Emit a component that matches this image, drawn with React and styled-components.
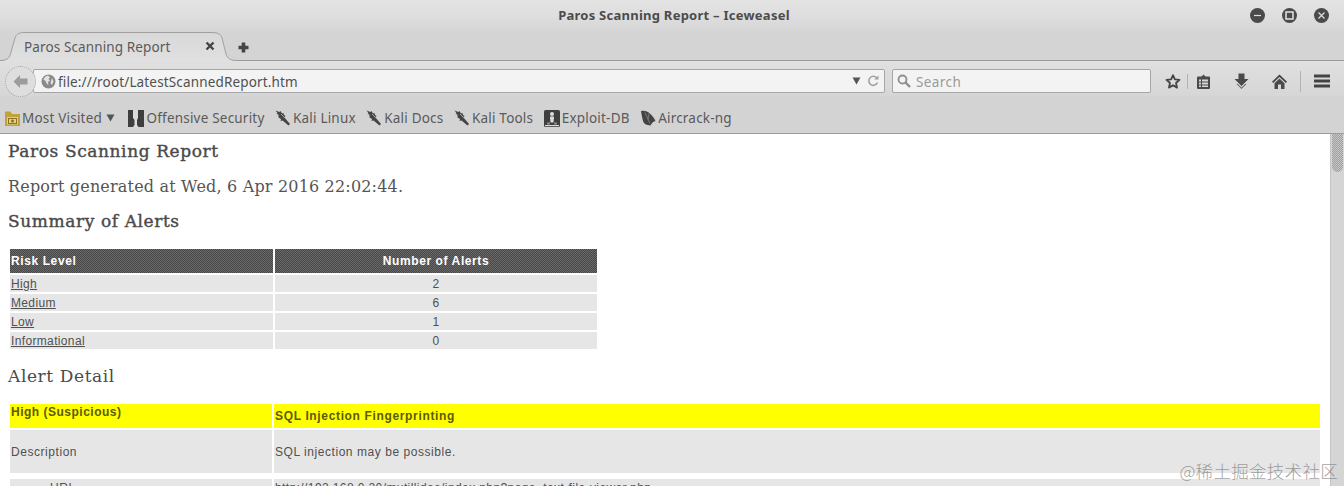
import React from 'react';
import styled, { createGlobalStyle } from 'styled-components';

const Global = createGlobalStyle`
  html, body { margin: 0; padding: 0; height: 486px; overflow: hidden; background: #fff; }
`;

const uiFont = `"Noto Sans", "Open Sans", sans-serif`;

const Window = styled.div`
  position: relative;
  width: 1344px;
  height: 486px;
  overflow: hidden;
  display: flex;
  flex-direction: column;
  font-family: ${uiFont};
  color: #4a4a4a;
`;

const Chrome = styled.header`
  height: 134px;
  flex: none;
  box-sizing: border-box;
  border-bottom: 1px solid #9c9c9c;
  background: linear-gradient(#e4e4e4 0, #dcdcdc 20px, #d4d4d4 34px, #d3d3d3 100%);
  display: flex;
  flex-direction: column;
`;

const TitleBar = styled.div`
  height: 32px;
  flex: none;
  display: grid;
  grid-template-columns: 1fr auto 1fr;
  align-items: center;
`;

const Title = styled.div`
  grid-column: 2;
  font-size: 13px;
  font-weight: 700;
  color: #4c4c4c;
  letter-spacing: 0.25px;
  padding: 0 0 3px 0;
  margin-left: 4px;
`;

const WindowButtons = styled.div`
  grid-column: 3;
  justify-self: end;
  display: flex;
  gap: 17px;
  padding: 0 15px 2px 0;
`;

const WindowButton = styled.div`
  width: 15px;
  height: 15px;
  border-radius: 50%;
  background: #4a4a4a;
  display: flex;
  align-items: center;
  justify-content: center;
`;

const TabStrip = styled.div`
  height: 29px;
  flex: none;
  box-sizing: border-box;
  border-bottom: 1px solid #9a9a9a;
  display: flex;
  align-items: flex-end;
`;

const Tab = styled.div`
  position: relative;
  width: 237px;
  height: 29px;
  box-sizing: border-box;
  margin-bottom: -1px;
  display: flex;
  align-items: center;
  justify-content: space-between;
  padding: 1px 21px 0 24px;
  font-size: 13.5px;
  color: #5a5a5a;
  letter-spacing: 0.12px;
`;

const TabShape = styled.svg`
  position: absolute;
  left: 0;
  top: 0;
`;

const TabLabel = styled.span`
  position: relative;
`;

const TabClose = styled.span`
  position: relative;
  display: flex;
  margin-top: -3px;
`;

const NewTab = styled.div`
  margin: 0 0 7px 1px;
  display: flex;
`;

const NavBar = styled.div`
  height: 35px;
  flex: none;
  display: flex;
  align-items: center;
  background: linear-gradient(#e0e0e0, #d6d6d6);
  padding: 5px 0 0 5px;
  box-sizing: border-box;
`;

const BackButton = styled.div`
  width: 31px;
  height: 31px;
  box-sizing: border-box;
  border-radius: 50%;
  border: 1px dotted #a8a8a8;
  background: #dedede;
  display: flex;
  align-items: center;
  justify-content: center;
  flex: none;
  position: relative;
  z-index: 1;
  margin-right: -3px;
`;

const Field = styled.div`
  height: 24px;
  box-sizing: border-box;
  border: 1px solid #a6a6a6;
  border-radius: 2px;
  background: #f3f3f3;
  display: flex;
  align-items: center;
  flex: none;
  width: ${p => p.$width}px;
  margin-left: ${p => p.$gap}px;
  padding: 0 5px 0 ${p => p.$left}px;
`;

const UrlText = styled.span`
  margin-left: 2px;
  padding-top: 1px;
  font-size: 13.5px;
  color: #505050;
  letter-spacing: 0.15px;
  flex: 1;
  white-space: nowrap;
`;

const ReloadSlot = styled.span`
  display: flex;
  margin-left: 6px;
`;

const SearchText = styled.span`
  margin-left: 5px;
  padding-top: 1px;
  font-size: 13.5px;
  color: #9a9a9a;
  letter-spacing: 0.4px;
`;

const ToolIcons = styled.div`
  display: flex;
  align-items: center;
  flex: none;
  margin-left: 14px;
`;

const ToolSlot = styled.div`
  width: ${p => p.$width}px;
  display: flex;
  justify-content: center;
`;

const Divider = styled.div`
  width: 1px;
  height: ${p => p.$height}px;
  background: #b2b2b2;
  flex: none;
  margin-left: ${p => p.$left}px;
`;

const BookmarkBar = styled.nav`
  flex: 1;
  display: flex;
  align-items: center;
  gap: 10.5px;
  padding: 7px 0 0 5px;
`;

const Bookmark = styled.div`
  display: flex;
  align-items: center;
  gap: 2px;
  font-size: 13.5px;
  color: #5a5a5a;
  letter-spacing: 0.2px;
  white-space: nowrap;
`;

const BookmarkCaret = styled.span`
  display: flex;
  margin: 0 3px 0 2px;
`;

const Body = styled.div`
  flex: 1;
  min-height: 0;
  display: flex;
`;

const Page = styled.main`
  flex: 1;
  min-width: 0;
  overflow: hidden;
  padding: 8px 10px 0 8px;
  box-sizing: border-box;
  background: #fff;
`;

const Heading = styled.h3`
  margin: ${p => p.$margin || 0};
  font-family: "DejaVu Serif", serif;
  font-size: 17px;
  font-weight: 400;
  color: #4a4a4a;
  line-height: 18px;
  letter-spacing: ${p => p.$spacing}px;
  -webkit-text-stroke: ${p => p.$stroke || 0}px #4a4a4a;
`;

const Generated = styled.p`
  margin: 17px 0 15px;
  font-family: "DejaVu Serif", serif;
  font-size: 16px;
  line-height: 20px;
  font-weight: 400;
  color: #555;
  letter-spacing: 0.18px;
`;

const Table = styled.table`
  border-collapse: separate;
  border-spacing: 2px;
  table-layout: fixed;
  width: ${p => p.$width}px;
  font-family: "Liberation Sans", Arial, sans-serif;
  font-size: 12px;
  letter-spacing: ${p => p.$spacing}px;
  color: #505050;
  margin: 17px 0 0;
`;

const FirstCol = styled.col`
  width: ${p => p.$width}px;
`;

const HeadCell = styled.th`
  height: 24px;
  padding: 0 1px;
  box-sizing: border-box;
  color: #fff;
  font-size: 12px;
  font-weight: 700;
  letter-spacing: 0.6px;
  text-align: ${p => p.$align || 'left'};
  background: repeating-conic-gradient(#474747 0 25%, #6a6a6a 0 50%) 0 0 / 2px 2px;
  vertical-align: middle;
`;

const Cell = styled.td`
  height: ${p => p.$height}px;
  padding: 0 1px;
  padding-left: ${p => p.$indent || 1}px;
  box-sizing: border-box;
  background: #e6e6e6;
  text-align: ${p => p.$align || 'left'};
  vertical-align: middle;
  line-height: 14px;
  overflow: hidden;
  white-space: nowrap;
  ${p => p.$spacing ? `letter-spacing: ${p.$spacing}px;` : ''}
`;

const SpacerCell = styled.td`
  height: 2px;
  padding: 0;
`;

const AlertCell = styled.td`
  height: 24px;
  padding: 0 1px;
  box-sizing: border-box;
  background: #ffff00;
  color: #5b5b00;
  font-weight: 700;
  letter-spacing: ${p => p.$spacing}px;
  vertical-align: ${p => p.$top ? 'top' : 'middle'};
  line-height: 16px;
`;

const RiskLink = styled.a`
  color: #505050;
  text-decoration: underline;
`;

const ScrollTrack = styled.aside`
  width: 14px;
  flex: none;
  box-sizing: border-box;
  background: #d5d5d5;
  border-left: 1px solid #c4c4c4;
  padding: 0 1px;
`;

const ScrollThumb = styled.div`
  height: 38px;
  border-radius: 0 0 6px 6px;
  background: repeating-conic-gradient(#9f9f9f 0 25%, #c6c6c6 0 50%) 0 0 / 2px 2px;
`;

const Watermark = styled.div`
  position: absolute;
  right: 6px;
  bottom: 5px;
  font-family: "Noto Sans CJK SC", sans-serif;
  font-size: 17.5px;
  font-weight: 300;
  line-height: 20px;
  color: rgba(120, 120, 120, 0.7);
  letter-spacing: 0.3px;
`;

const TabOutline = () => (
  <TabShape width="237" height="29" viewBox="0 0 237 29">
    <defs>
      <linearGradient id="tabFill" x1="0" y1="0" x2="0" y2="1">
        <stop offset="0" stopColor="#d8d8d8" />
        <stop offset="1" stopColor="#e0e0e0" />
      </linearGradient>
    </defs>
    <path d="M0 28.500C6 28.500 9 27 10.500 22L15 6C16 2.500 19 0.500 24 0.500H212C218 0.500 221 2.500 222 6L226 22C227.500 27 231 28.500 237 28.500V29H0z" fill="url(#tabFill)" />
    <path d="M0 28.500C6 28.500 9 27 10.500 22L15 6C16 2.500 19 0.500 24 0.500H212C218 0.500 221 2.500 222 6L226 22C227.500 27 231 28.500 237 28.500" fill="none" stroke="#a0a0a0" />
  </TabShape>
);
const Close = () => (
  <svg width="12" height="12" viewBox="0 0 12 12"><path d="M2.500 2.500l7 7M9.500 2.500l-7 7" stroke="#444" strokeWidth="2.400" /></svg>
);
const Plus = () => (
  <svg width="11" height="11" viewBox="0 0 11 11"><path d="M5.500 0.500v10M0.500 5.500h10" stroke="#444" strokeWidth="3.600" /></svg>
);
const Minimize = () => (
  <svg width="9" height="9" viewBox="0 0 9 9"><path d="M1 4.500h7" stroke="#ddd" strokeWidth="1.200" /></svg>
);
const Maximize = () => (
  <svg width="9" height="9" viewBox="0 0 9 9"><rect x="1" y="1" width="7" height="7" fill="none" stroke="#e4e4e4" strokeWidth="1.500" /></svg>
);
const CloseSmall = () => (
  <svg width="9" height="9" viewBox="0 0 9 9"><path d="M1.500 1.500l6 6M7.500 1.500l-6 6" stroke="#ddd" strokeWidth="1.200" /></svg>
);
const BackArrow = () => (
  <svg width="15" height="13" viewBox="0 0 15 13"><path d="M7 0L0.500 6.500 7 13V9.500h7.500v-6H7z" fill="#9c9c9c" /></svg>
);
const Globe = () => (
  <svg width="15" height="15" viewBox="0 0 15 15">
    <circle cx="7.500" cy="7.500" r="7" fill="#8a8a8a" />
    <path d="M7 1.500C5 2 3 3.500 2.500 5.500l2 1.500 1.500 3 1.500 1-.5-3L9 6.500 7.500 5 9 3.500zM11 4l1.500 3.500L11 11 9.500 9z" fill="#e2e2e2" />
  </svg>
);
const Caret = () => (
  <svg width="9" height="8" viewBox="0 0 9 8"><path d="M0.500 0.500h8L4.500 7.500z" fill="#555" /></svg>
);
const Reload = () => (
  <svg width="12" height="12" viewBox="0 0 12 12">
    <path d="M10 3.200A4.500 4.500 0 1 0 10.500 7.500" fill="none" stroke="#a2a2a2" strokeWidth="1.600" />
    <path d="M7.200 4.500H11.500V0.500z" fill="#a2a2a2" />
  </svg>
);
const Magnifier = () => (
  <svg width="14" height="14" viewBox="0 0 14 14">
    <circle cx="5.500" cy="5.500" r="4" fill="none" stroke="#8e8e8e" strokeWidth="1.800" />
    <path d="M8.500 8.500l4.500 4.500" stroke="#8e8e8e" strokeWidth="2.400" />
  </svg>
);
const Star = () => (
  <svg width="17" height="17" viewBox="0 0 17 17">
    <path d="M8.500 1.800l2 4.500 4.900.5-3.700 3.300 1.100 4.900-4.300-2.500-4.300 2.500 1.100-4.900L1.600 6.800l4.900-.5z" fill="none" stroke="#444" strokeWidth="1.900" strokeLinejoin="round" />
  </svg>
);
const Clipboard = () => (
  <svg width="15" height="15" viewBox="0 0 15 15">
    <path d="M5.500 2.500L7.500 0.500 9.500 2.500H13a1 1 0 0 1 1 1V14a1 1 0 0 1-1 1H2a1 1 0 0 1-1-1V3.500a1 1 0 0 1 1-1z" fill="#4a4a4a" />
    <path d="M3 5.500h2v2H3zM6 5.500h6v2H6zM3 8.500h2v2H3zM6 8.500h6v2H6zM3 11.500h2v1.500H3zM6 11.500h6v1.500H6z" fill="#d8d8d8" />
  </svg>
);
const Download = () => (
  <svg width="15" height="16" viewBox="0 0 15 16">
    <path d="M4.500 0.500h6V6H14.500L7.500 13 0.500 6H4.500z" fill="#4a4a4a" />
    <path d="M2.500 11l5 5 5-5-1.200-.2-3.800 3.700-3.800-3.700z" fill="#6d6d6d" />
  </svg>
);
const Home = () => (
  <svg width="15" height="15" viewBox="0 0 15 15">
    <path d="M7.500 0.500L0 7.700 1.200 9 7.500 3 13.800 9 15 7.700z" fill="#444" />
    <path d="M2.500 9.200L7.500 4.500l5 4.700V15H9V10.500H6V15H2.500z" fill="#4a4a4a" />
  </svg>
);
const Menu = () => (
  <svg width="16" height="14" viewBox="0 0 16 14">
    <path d="M0 2h16M0 7h16M0 12h16" stroke="#444" strokeWidth="2.800" />
  </svg>
);
const FolderCamera = () => (
  <svg width="15" height="15" viewBox="0 0 15 15">
    <path d="M0 0.500h5.500L7 3h8v12H0z" fill="#bfa33a" />
    <rect x="2" y="6" width="11" height="7.500" fill="#e2cf85" />
    <rect x="3.500" y="7.500" width="8" height="5" fill="none" stroke="#8c7420" strokeWidth="1" />
    <circle cx="7.500" cy="10" r="1.500" fill="#8c7420" />
  </svg>
);
const OffSecIcon = () => (
  <svg width="16" height="17" viewBox="0 0 16 17">
    <rect width="16" height="17" fill="#3e3e3e" />
    <path d="M5 0h5v8l-1 2v5l1.500 2H5l1.500-2v-5L5 8z" fill="#dcdcdc" />
  </svg>
);
const DragonIcon = () => (
  <svg width="16" height="16" viewBox="0 0 16 16">
    <path d="M0.500 0.500l4 1.500 1-1 1.500 2.500 1.500-.5.500 2 1.500 1-1 1.500 5.500 6.500-1.500 1.500-6-5-2 .5.500-2-2.500-1.500L3.500 4.500l-2-.5 1-1z" fill="#454545" />
    <path d="M6 4l4 4" stroke="#bdbdbd" strokeWidth="0.800" />
  </svg>
);
const ExploitIcon = () => (
  <svg width="16" height="17" viewBox="0 0 16 17">
    <rect width="16" height="17" rx="1.500" fill="#3f3f3f" />
    <circle cx="8" cy="4" r="2" fill="#dedede" />
    <path d="M6 6.500h4l-.5 6h-3z" fill="#dedede" />
    <path d="M1 15h14v1.200H1z" fill="#dedede" />
    <path d="M3 12.500h3v2H3zM10 12.500h3v2h-3z" fill="#8a8a8a" />
  </svg>
);
const AircrackIcon = () => (
  <svg width="16" height="16" viewBox="0 0 16 16">
    <path d="M1 1c6-1.500 12 4 14.500 10-2 .3-3.500 1.700-5 4.500C7 15 4 14.500 3 11 2.200 8 1.500 4.500 1 1z" fill="#444" />
    <path d="M5 2.500l5 11M9 3.500l-1 6" stroke="#8a8a8a" strokeWidth="0.800" fill="none" />
  </svg>
);

const bookmarks = [
  { icon: <FolderCamera />, label: 'Most Visited', caret: true },
  { icon: <OffSecIcon />, label: 'Offensive Security' },
  { icon: <DragonIcon />, label: 'Kali Linux' },
  { icon: <DragonIcon />, label: 'Kali Docs' },
  { icon: <DragonIcon />, label: 'Kali Tools' },
  { icon: <ExploitIcon />, label: 'Exploit-DB' },
  { icon: <AircrackIcon />, label: 'Aircrack-ng' },
];

const risks = [
  ['High', 2],
  ['Medium', 6],
  ['Low', 1],
  ['Informational', 0],
];

export default function App() {
  return (
    <Window>
      <Global />
      <Chrome>
        <TitleBar>
          <Title>Paros Scanning Report – Iceweasel</Title>
          <WindowButtons>
            <WindowButton><Minimize /></WindowButton>
            <WindowButton><Maximize /></WindowButton>
            <WindowButton><CloseSmall /></WindowButton>
          </WindowButtons>
        </TitleBar>
        <TabStrip>
          <Tab>
            <TabOutline />
            <TabLabel>Paros Scanning Report</TabLabel>
            <TabClose><Close /></TabClose>
          </Tab>
          <NewTab><Plus /></NewTab>
        </TabStrip>
        <NavBar>
          <BackButton><BackArrow /></BackButton>
          <Field $width={852} $gap={0} $left={7}>
            <Globe />
            <UrlText>file:///root/LatestScannedReport.htm</UrlText>
            <Caret />
            <ReloadSlot><Reload /></ReloadSlot>
          </Field>
          <Field $width={259} $gap={7} $left={4}>
            <Magnifier />
            <SearchText>Search</SearchText>
          </Field>
          <ToolIcons>
            <ToolSlot $width={16}><Star /></ToolSlot>
            <Divider $height={15} $left={6} />
            <ToolSlot $width={30}><Clipboard /></ToolSlot>
            <ToolSlot $width={46}><Download /></ToolSlot>
            <ToolSlot $width={30}><Home /></ToolSlot>
            <Divider $height={21} $left={6} />
            <ToolSlot $width={42}><Menu /></ToolSlot>
          </ToolIcons>
        </NavBar>
        <BookmarkBar>
          {bookmarks.map(b => (
            <Bookmark key={b.label}>
              {b.icon}
              {b.label}
              {b.caret && <BookmarkCaret><Caret /></BookmarkCaret>}
            </Bookmark>
          ))}
        </BookmarkBar>
      </Chrome>
      <Body>
        <Page>
          <Heading $spacing={0.6} $stroke={0.4}>Paros Scanning Report</Heading>
          <Generated>Report generated at Wed, 6 Apr 2016 22:02:44.</Generated>
          <Heading $spacing={0.6} $stroke={0.4}>Summary of Alerts</Heading>
          <Table $width={591} $spacing={0.35}>
            <colgroup><FirstCol $width={263} /><col /></colgroup>
            <thead>
              <tr>
                <HeadCell>Risk Level</HeadCell>
                <HeadCell $align="center">Number of Alerts</HeadCell>
              </tr>
            </thead>
            <tbody>
              {risks.map(([name, n]) => (
                <tr key={name}>
                  <Cell $height={17}><RiskLink href="#">{name}</RiskLink></Cell>
                  <Cell $height={17} $align="center">{n}</Cell>
                </tr>
              ))}
            </tbody>
          </Table>
          <Heading $spacing={0.6} $margin="16px 0 0">Alert Detail</Heading>
          <Table $width={1314} $spacing={0.55}>
            <colgroup><FirstCol $width={262} /><col /></colgroup>
            <tbody>
              <tr>
                <AlertCell $top $spacing={0.5}>High (Suspicious)</AlertCell>
                <AlertCell $spacing={0.65}>SQL Injection Fingerprinting</AlertCell>
              </tr>
              <tr>
                <Cell $height={43}>Description</Cell>
                <Cell $height={43}>SQL injection may be possible.</Cell>
              </tr>
              <tr><SpacerCell colSpan="2" /></tr>
              <tr>
                <Cell $height={17} $indent={40}>URL</Cell>
                <Cell $height={17} $spacing={0.4}>http://192.168.0.20/mutillidae/index.php?page=text-file-viewer.php</Cell>
              </tr>
            </tbody>
          </Table>
        </Page>
        <ScrollTrack><ScrollThumb /></ScrollTrack>
      </Body>
      <Watermark>@稀土掘金技术社区</Watermark>
    </Window>
  );
}
